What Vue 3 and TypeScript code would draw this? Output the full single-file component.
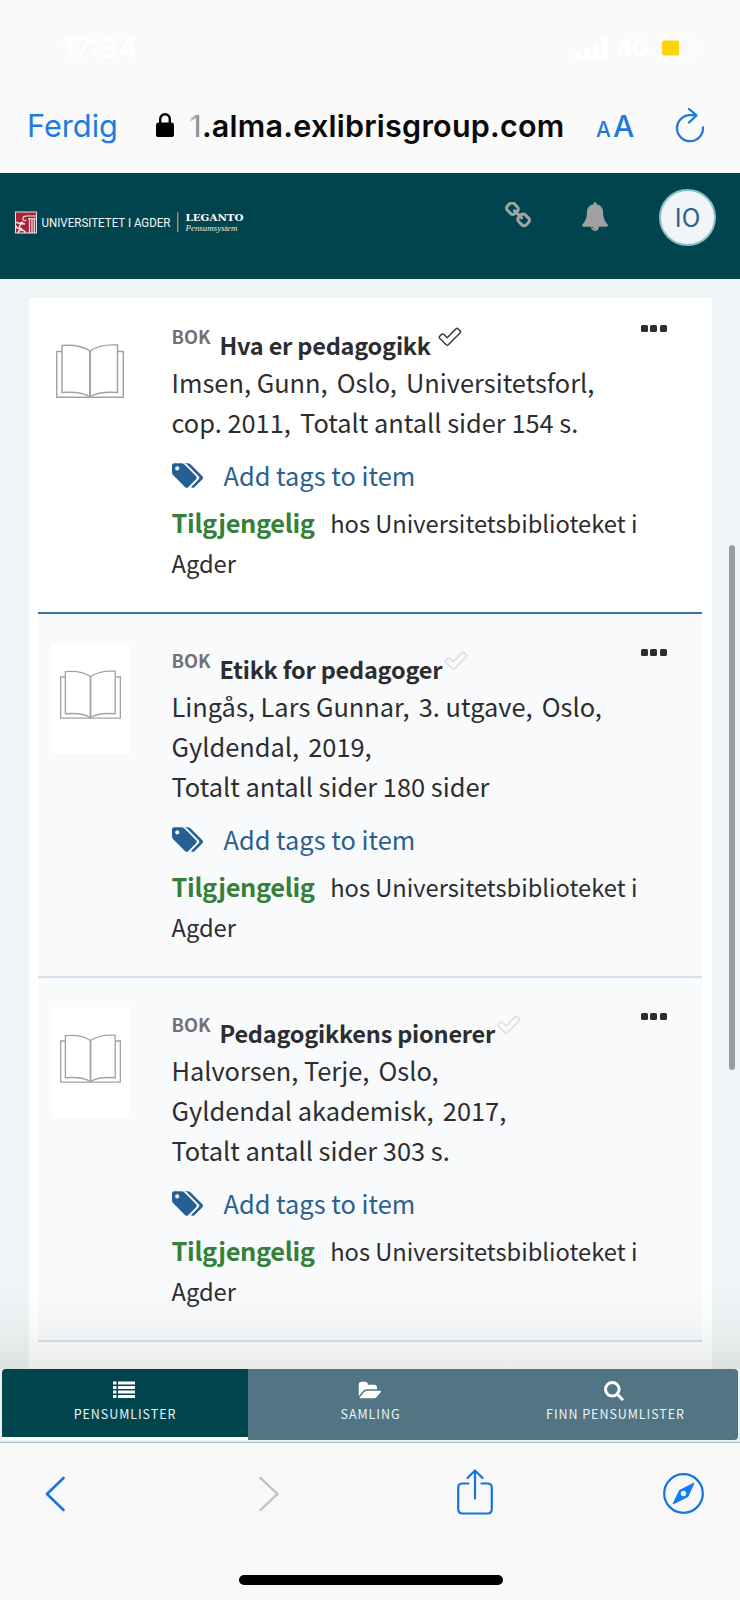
<script setup lang="ts">
interface Item {
  title: string
  done: boolean
  lines: string[][]
}

const items: Item[] = [
  {
    title: 'Hva er pedagogikk',
    done: true,
    lines: [
      ['Imsen, Gunn,', 'Oslo,', 'Universitetsforl,'],
      ['cop. 2011,', 'Totalt antall sider 154 s.'],
    ],
  },
  {
    title: 'Etikk for pedagoger',
    done: false,
    lines: [
      ['Lingås, Lars Gunnar,', '3. utgave,', 'Oslo,'],
      ['Gyldendal,', '2019,'],
      ['Totalt antall sider 180 sider'],
    ],
  },
  {
    title: 'Pedagogikkens pionerer',
    done: false,
    lines: [
      ['Halvorsen, Terje,', 'Oslo,'],
      ['Gyldendal akademisk,', '2017,'],
      ['Totalt antall sider 303 s.'],
    ],
  },
]
</script>

<template>
  <div class="screen">
    <div class="status">
      <span class="time">17:34</span>
      <div class="signals">
        <svg width="34" height="22" viewBox="0 0 34 22" fill="#fff">
          <rect x="1" y="15" width="6" height="6" rx="1.5" />
          <rect x="10" y="11" width="6" height="10" rx="1.5" />
          <rect x="19" y="6" width="6" height="15" rx="1.5" />
          <rect x="28" y="1" width="6" height="20" rx="1.5" />
        </svg>
        <span class="net">4G</span>
        <svg width="44" height="22" viewBox="0 0 44 22">
          <rect x="1" y="1" width="37" height="20" rx="6" fill="none" stroke="#fdfdfe" stroke-width="1.5" />
          <rect x="4" y="3.5" width="17" height="15" rx="2.5" fill="#fcd50c" />
          <path d="M41 8v6" stroke="#fdfdfe" stroke-width="2.5" stroke-linecap="round" />
        </svg>
      </div>
    </div>

    <div class="urlbar">
      <span class="ferdig">Ferdig</span>
      <svg class="lock" width="18" height="25" viewBox="0 0 18 25">
        <path d="M4.2 12V7a4.8 4.8 0 0 1 9.6 0v5" fill="none" stroke="#000" stroke-width="2.4" />
        <rect x="0" y="10.5" width="18" height="14.5" rx="2.6" />
      </svg>
      <span class="url"><span class="fade">1</span>.alma.exlibrisgroup.com</span>
      <span class="aa"><small>A</small>A</span>
      <svg class="reload" width="30" height="36" viewBox="0 0 30 36" fill="none" stroke="#1f7ae0" stroke-width="2.3" stroke-linecap="round" stroke-linejoin="round">
        <path d="M28 20.5A13 13 0 1 1 15 8.2H21" />
        <path d="M14 2l7.5 6.4L14 15.500" />
      </svg>
    </div>

    <header class="head">
      <svg class="logo" width="236" height="26" viewBox="0 0 236 26">
        <rect x="0.5" y="2" width="21" height="21" fill="#a9223c" stroke="#e8dfe3" />
        <g fill="none" stroke="#f3e9ec">
          <path d="M21 6H11.500Q7.500 6 8 9q1 2.500 3.300 1.300M21 8.800h-8" stroke-width="1.100" />
          <path d="M14.500 9v14M17 9v14M19.300 9v14" stroke-width="1.200" />
          <path d="M1 12q3 2.500 7-.2M1 16q1.200 3 4 2.800M10 14q-5-1-5.500 2.500 0 2.500 2.800 2.200M3 23q.5-3 3.500-3t4 3" stroke-width="1.500" />
        </g>
        <text x="26.500" y="17.200" class="uni" textLength="129" lengthAdjust="spacingAndGlyphs">UNIVERSITETET I AGDER</text>
        <rect x="162" y="2" width="1.400" height="20" fill="#b98a4e" />
        <text x="170.500" y="10.800" class="leg" textLength="58" lengthAdjust="spacingAndGlyphs">LEGANTO</text>
        <text x="170.500" y="20.500" class="pen" textLength="52" lengthAdjust="spacingAndGlyphs">Pensumsystem</text>
      </svg>
      <svg class="link" width="26" height="26" viewBox="80 64 1632 1632" fill="#a3a3a5">
        <path d="M1520 1216q0-40-28-68l-208-208q-28-28-68-28-42 0-72 32 3 3 19 18.500t21.500 21.500 15 19 13 25.500 3.500 27.500q0 40-28 68t-68 28q-15 0-27.500-3.500t-25.500-13-19-15-21.500-21.500-18.500-19q-33 31-33 73 0 40 28 68l206 207q27 27 68 27 40 0 68-26l147-146q28-28 28-67zm-703-705q0-40-28-68l-206-207q-28-28-68-28-39 0-68 27l-147 146q-28 28-28 67 0 40 28 68l208 208q27 27 68 27 42 0 72-31-3-3-19-18.500t-21.500-21.500-15-19-13-25.500-3.500-27.500q0-40 28-68t68-28q15 0 27.500 3.500t25.500 13 19 15 21.500 21.500 18.500 19q33-31 33-73zm895 705q0 120-85 203l-147 146q-83 83-203 83-121 0-204-85l-206-207q-83-83-83-203 0-123 88-209l-88-88q-86 88-208 88-120 0-204-84l-208-208q-84-84-84-204t85-203l147-146q83-83 203-83 121 0 204 85l206 207q83 83 83 203 0 123-88 209l88 88q86-88 208-88 120 0 204 84l208 208q84 84 84 204z" />
      </svg>
      <svg class="bell" width="26" height="29" viewBox="64 0 1664 1792" preserveAspectRatio="none" fill="#a0a0a2">
        <path d="M912 1696q0-16-16-16-59 0-101.500-42.500t-42.500-101.500q0-16-16-16t-16 16q0 73 51.500 124.500t124.500 51.500q16 0 16-16zm816-288q0 52-38 90t-90 38h-448q0 106-75 181t-181 75-181-75-75-181h-448q-52 0-90-38t-38-90q50-42 91-88t85-119.500 74.500-158.500 50-206 19.500-260q0-152 117-282.500t307-158.500q-8-19-8-39 0-40 28-68t68-28 68 28 28 68q0 20-8 39 190 28 307 158.500t117 282.500q0 139 19.500 260t50 206 74.500 158.500 85 119.500 91 88z" />
      </svg>
      <span class="avatar">IO</span>
    </header>

    <main class="page">
      <div class="card">
        <article v-for="(it, i) in items" :key="it.title" class="item" :class="{ first: i === 0 }">
          <div class="thumb">
            <svg class="book" viewBox="0 0 68 54" fill="#fff" stroke="#a2a2a3" stroke-width="1.500">
              <path d="M6 7.500H.7V53.300H67.300V7.500H62" />
              <path d="M6 1.500Q24 0 34 7Q44 0 61.500 1V48.500Q42 47 34 53Q26 47 6 48.500Z" />
              <path d="M34 7V53" stroke-width="2" />
            </svg>
          </div>
          <div class="body">
            <div class="titles">
              <span class="kind">BOK</span>
              <span class="title">{{ it.title }}</span>
              <svg class="check" :class="{ done: it.done }" width="24" height="20" viewBox="0 0 24 20" fill="none" stroke-width="1.500" stroke-linejoin="round">
                <path d="M1.700 9.200L3.600 7.400Q4.800 6.400 6 7.500L9.200 10.700L17.700 2Q19 .800 20.300 2L22.200 3.800Q23 4.800 22.200 5.700L10.300 17.700Q9.200 18.700 8.200 17.700L1.700 11.200Q.800 10.200 1.700 9.200Z" />
              </svg>
            </div>
            <div class="meta">
              <div v-for="(line, n) in it.lines" :key="n" class="line">
                <span v-for="f in line" :key="f" class="field">{{ f }}</span>
              </div>
            </div>
            <div class="tags">
              <svg width="31" height="25" viewBox="0 128 1899 1515" fill="#265f91">
                <path d="M448 448q0-53-37.500-90.500t-90.500-37.500-90.500 37.500-37.500 90.500 37.500 90.500 90.500 37.500 90.500-37.500 37.500-90.500zm1067 576q0 53-37 90l-491 492q-39 37-91 37-53 0-90-37l-715-716q-38-37-64.500-101t-26.500-117v-416q0-52 38-90t90-38h416q53 0 117 26.500t102 64.500l715 714q37 39 37 91zm384 0q0 53-37 90l-491 492q-39 37-91 37-36 0-59-14t-53-45l470-470q37-37 37-90 0-52-37-91l-715-714q-38-38-102-64.500t-117-26.500h224q53 0 117 26.500t102 64.500l715 714q37 39 37 91z" />
              </svg>
              <span>Add tags to item</span>
            </div>
            <div class="avail">
              <b>Tilgjengelig</b><span>hos Universitetsbiblioteket i</span><br />
              <span>Agder</span>
            </div>
          </div>
          <div class="dots"><i></i><i></i><i></i></div>
        </article>
      </div>
      <div class="scrollbar"></div>
      <div class="shade"></div>
    </main>

    <nav class="tabs">
      <div class="tab active">
        <svg width="22" height="18" viewBox="0 0 22 18" fill="#fff">
          <path d="M0 .500h3.500v3H0zM5 .500h17v3H5zM0 5h3.500v3H0zM5 5h17v3H5zM0 9.500h3.500v3H0zM5 9.500h17v3H5zM0 14h3.500v3H0zM5 14h17v3H5z" />
        </svg>
        <span>PENSUMLISTER</span>
      </div>
      <div class="tab">
        <svg width="23" height="18" viewBox="0 128 1943 1408" fill="#fff">
          <path d="M1943 952q0 31-31 66l-336 396q-43 51-120.500 86.500t-143.500 35.500h-1088q-34 0-60.500-13t-26.500-43q0-31 31-66l336-396q43-51 120.500-86.500t143.500-35.500h1088q34 0 60.500 13t26.500 43zm-343-344v160h-832q-94 0-197 47.500t-164 119.500l-337 396-5 6q0-4-.500-12.500t-.500-12.500v-960q0-92 66-158t158-66h320q92 0 158 66t66 158v32h544q92 0 158 66t66 158z" />
        </svg>
        <span>SAMLING</span>
      </div>
      <div class="tab">
        <svg class="mag" width="20" height="20" viewBox="0 0 20 20" fill="none" stroke="#fff" stroke-width="3">
          <circle cx="8.300" cy="8.300" r="6.800" />
          <path d="M13 13l5.200 5.200" stroke-linecap="round" />
        </svg>
        <span>FINN PENSUMLISTER</span>
      </div>
    </nav>

    <footer class="toolbar">
      <div class="tools">
        <svg width="20" height="36" viewBox="0 0 20 36" fill="none" stroke="#1675dc" stroke-width="2.600" stroke-linecap="round" stroke-linejoin="round"><path d="M18.500 2L2 18l16.500 16" /></svg>
        <svg class="forward" width="20" height="36" viewBox="0 0 20 36" fill="none" stroke="#bfbfc1" stroke-width="2.300" stroke-linecap="round" stroke-linejoin="round"><path d="M1.500 2L18.500 18L1.500 34" /></svg>
        <svg class="share" width="36" height="46" viewBox="0 0 36 46" fill="none" stroke="#1675dc" stroke-width="2.200" stroke-linecap="round" stroke-linejoin="round">
          <path d="M11.500 14.500H5.500Q1.200 14.500 1.200 18.800V40Q1.200 44.500 5.500 44.500H30.500Q34.800 44.500 34.800 40V18.800Q34.800 14.500 30.500 14.500H24.500M18 29.500V1.500M10.500 9L18 1.500L25.500 9" />
        </svg>
        <svg class="compass" width="41" height="41" viewBox="0 0 41 41">
          <circle cx="20.500" cy="20.500" r="19.300" fill="none" stroke="#1675dc" stroke-width="2.200" />
          <path d="M31 10L25 23.500L10 31L16.500 17.500Z" fill="#0f7af5" stroke="#0f7af5" stroke-linejoin="round" />
          <circle cx="20.500" cy="20.500" r="2.700" fill="#f8f8f9" />
        </svg>
      </div>
      <div class="home"></div>
    </footer>
  </div>
</template>

<style>
body {
  margin: 0;
}
</style>

<style scoped>
.screen {
  width: 740px;
  height: 1600px;
  display: flex;
  flex-direction: column;
  overflow: hidden;
  background: #fafafb;
  font-family: "Noto Sans CJK SC", "Noto Sans", sans-serif;
  color: #2d2d2f;
  white-space: nowrap;
}
.screen * {
  box-sizing: border-box;
}
svg {
  display: block;
  flex: none;
}
.status {
  height: 96px;
  padding: 0 38px 0 62px;
  display: flex;
  align-items: center;
  justify-content: space-between;
  font: 600 29px/30px Inter, sans-serif;
  color: #fff;
}
.signals {
  display: flex;
  align-items: center;
}
.net {
  font-size: 23px;
  width: 50px;
  padding-left: 9px;
}
.urlbar {
  height: 76.500px;
  display: flex;
  align-items: flex-start;
  font-family: Inter, sans-serif;
  color: #1f7ae0;
}
.ferdig {
  margin: 11px 0 0 27px;
  width: 129px;
  font-size: 30.700px;
  line-height: 38px;
}
.lock {
  margin-top: 16px;
}
.url {
  margin: 11px 0 0 15px;
  width: 391px;
  font-size: 30.500px;
  font-weight: 600;
  line-height: 38px;
  letter-spacing: 0.240px;
  color: #0a0a0a;
}
.fade {
  background: linear-gradient(90deg, #d5d5d5, #777);
  background-clip: text;
  color: transparent;
  font-weight: 500;
}
.aa {
  margin: 11px 0 0 16px;
  width: 79px;
  font-size: 30px;
  font-weight: 500;
  line-height: 38px;
}
.aa small {
  font-size: 21px;
  margin-right: 2px;
}
.reload {
  margin-top: 11px;
}
.head {
  height: 106px;
  background: #00454e;
  display: flex;
  align-items: flex-start;
}
.logo {
  margin: 37px 0 0 15px;
}
.uni {
  font: 400 13.300px Roboto, sans-serif;
  fill: #f4fafa;
}
.leg {
  font: bold 9px "DejaVu Serif", "Liberation Serif", serif;
  fill: #fff;
}
.pen {
  font: italic 8px "Liberation Serif", serif;
  fill: #e3edee;
}
.link {
  margin: 29px 0 0 254px;
}
.bell {
  margin: 29px 0 0 51px;
}
.avatar {
  margin: 16px 0 0 51px;
  width: 57px;
  height: 57px;
  border-radius: 50%;
  border: 2px solid #8cc0c4;
  background: #f0f5f7;
  color: #33618c;
  font-size: 25px;
  line-height: 51px;
  text-align: center;
}
.page {
  position: relative;
  height: 1090.500px;
  flex: none;
  padding: 19.500px 28px 0 29px;
  background: #eff5f6;
  overflow: hidden;
}
.card {
  background: #fff;
  height: 1100px;
  padding: 0 10px 0 9px;
}
.item {
  display: flex;
  height: 364px;
  border-bottom: 2px solid #d3e0ee;
  background: #f8fafc;
}
.item.first {
  height: 316px;
  border-color: #41719f;
  background: #fff;
}
.first .thumb,
.first .body,
.first .dots {
  margin-top: -8px;
}
.thumb {
  width: 77px;
  height: 140px;
  margin-left: 14px;
  border-top: 29px solid #f8fafc;
  background: #fff;
  padding-top: 27px;
}
.first .thumb {
  border-color: transparent;
  background: none;
}
.book {
  width: 61px;
  height: 49px;
  margin-left: 8px;
}
.first .book {
  width: 68px;
  height: 54px;
  margin: -2px 0 0 4px;
}
.body {
  margin-left: 42.500px;
  width: 469px;
}
.titles {
  display: flex;
  align-items: flex-start;
  height: 72px;
}
.kind {
  margin-top: 34px;
  width: 48px;
  font-size: 18.300px;
  font-weight: 700;
  line-height: 24px;
  color: #747075;
}
.title {
  margin-top: 37px;
  font-size: 23.500px;
  font-weight: 700;
  line-height: 36px;
  letter-spacing: -0.210px;
}
.check {
  margin: 37px 0 0 2px;
  stroke: #dcdddf;
}
.check.done {
  margin-left: 7px;
  stroke: #3a3a3c;
}
.meta {
  font-size: 25.400px;
  line-height: 40px;
}
.field + .field {
  margin-left: 9.200px;
}
.tags {
  margin-top: 13px;
  display: flex;
  align-items: center;
  gap: 21px;
  font-size: 25.400px;
  line-height: 40px;
  color: #2b608f;
}
.avail {
  margin-top: 8px;
  font-size: 23.700px;
  line-height: 40px;
}
.avail b {
  color: #35803a;
  font-size: 25.400px;
  line-height: 1;
  letter-spacing: -0.330px;
  margin-right: 15.500px;
}
.dots {
  display: flex;
  gap: 2.500px;
  padding-top: 34.500px;
}
.dots i {
  width: 7px;
  height: 7px;
  border-radius: 1.500px;
  background: #2d2d2f;
}
.scrollbar {
  position: absolute;
  left: 729px;
  top: 266px;
  width: 6px;
  height: 525px;
  border-radius: 3px;
  background: #9b9da0;
}
.shade {
  position: absolute;
  left: 0;
  right: 0;
  bottom: 0;
  height: 82px;
  background: linear-gradient(rgba(60, 50, 45, 0), rgba(60, 50, 45, 0.03) 50%, rgba(60, 50, 45, 0.1));
}
.tabs {
  height: 74px;
  flex: none;
  display: grid;
  grid-template-columns: 246px 245px 245px;
  padding: 0 2px 2px;
  background: #e7f0f2;
  border-bottom: 1px solid #a9b9c1;
}
.tab {
  display: flex;
  flex-direction: column;
  align-items: center;
  background: #517585;
  padding-top: 12px;
  color: #e9f4f7;
  font-size: 12.500px;
  letter-spacing: 0.950px;
}
.tab svg {
  margin-right: 3px;
}
.tab:last-child {
  border-radius: 0 4px 4px 0;
}
.tab.active {
  background: #00454e;
  border-radius: 4px 0 0 0;
  border-bottom: 3px solid #fff;
}
.tab span {
  line-height: 20px;
  margin-top: 5px;
}
.tab .mag + span {
  margin-top: 3px;
}
.toolbar {
  flex: 1;
  background: #f8f8f9;
}
.tools {
  padding: 25px 0 0 45px;
  height: 76px;
  display: flex;
  align-items: center;
}
.forward {
  margin-left: 194px;
}
.share {
  margin: 0 0 3px 178px;
}
.compass {
  margin-left: 170px;
}
.home {
  margin: 56px 0 0 239px;
  width: 264px;
  height: 10px;
  border-radius: 5px;
  background: #000;
}
</style>
